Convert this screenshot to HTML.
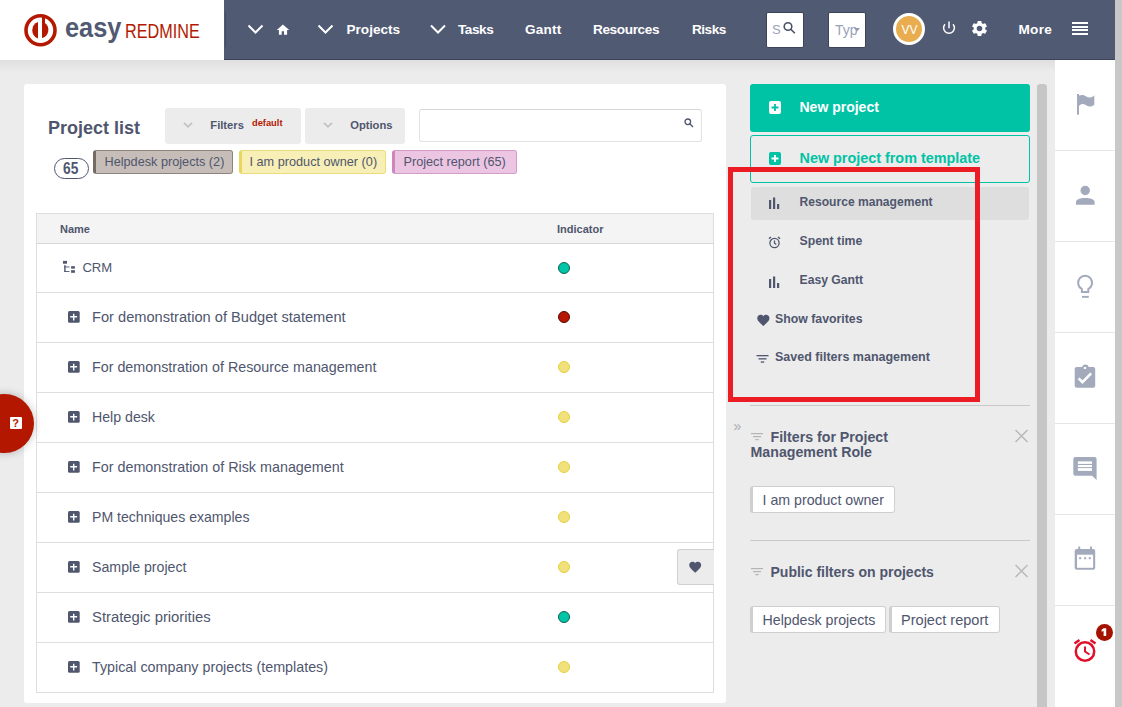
<!DOCTYPE html>
<html><head><meta charset="utf-8">
<style>
*{margin:0;padding:0;box-sizing:border-box}
html,body{width:1122px;height:707px;overflow:hidden;background:#ececec;font-family:"Liberation Sans",sans-serif;color:#4f566e;position:relative}
.a{position:absolute}
.t{position:absolute;white-space:nowrap;line-height:1}
.b{font-weight:bold}
#hdr{left:0;top:0;width:1115px;height:60px;background:#515a73;border-bottom:1px solid #3d4457}
#logo{left:0;top:0;width:224px;height:60px;background:#fff}
#shadow{left:0;top:60px;width:1055px;height:12px;background:linear-gradient(#dfdfdf,#ececec)}
.nav{color:#fff;font-weight:bold;font-size:13.6px}
#main{left:24px;top:84px;width:702px;height:619px;background:#fff;border-radius:3px}
.btn{background:#ececec;border-radius:3px}
.tag{height:24px;border:1px solid;border-left-width:3px;border-radius:3px}
.row{left:36px;width:678px;height:1px;background:#dedede}
.dot{width:12px;height:12px;border-radius:50%;border:1px solid}
.y{background:#f0e17c;border-color:#e6d03c}
.g{background:#00c5a7;border-color:#0e6152}
.r{background:#b51700;border-color:#5a0800}
.plus{width:12px;height:11px;background:#4f566e;border-radius:2px}
.rt{font-size:14.4px}
.side{font-weight:bold;font-size:12.3px}
.wbtn{height:26.5px;background:#fff;border:1px solid #cfcfcf;border-left:3px solid #cfcfcf;border-radius:3px;font-size:14.2px}
</style></head><body>
<!-- header -->
<div id="hdr" class="a"></div>
<div id="logo" class="a"></div>
<div class="a" style="left:1115px;top:0;width:7px;height:707px;background:#c8c8c8"></div>
<svg class="a" style="left:0;top:0" width="224" height="60">
  <circle cx="40.5" cy="30.25" r="14.5" fill="none" stroke="#b31900" stroke-width="3.6"/>
  <path d="M38 22 A8.8 8.8 0 0 0 38 38.5 Z" fill="#b31900"/>
  <path d="M42 15.5 L45 15.5 L45 23 A8.5 8.5 0 0 1 42 38 Z" fill="#b31900"/>
</svg>
<div class="t b" style="left:64.5px;top:15.3px;font-size:27px;color:#525a72;transform:scaleX(0.94);transform-origin:0 0">easy</div>
<div class="t" style="left:125px;top:20.6px;font-size:20.5px;color:#b31900;transform:scaleX(0.79);transform-origin:0 0">REDMINE</div>

<div class="a" style="left:224.8px;top:12px;width:1.2px;height:35px;background:#454c62"></div>
<svg class="a" style="left:240px;top:15px" width="520" height="30" fill="none" stroke="#fff" stroke-width="2">
  <path d="M8.5 10.5 L15.5 17.5 L22.5 10.5"/>
  <path d="M78.5 10.5 L85.5 17.5 L92.5 10.5"/>
  <path d="M191 10.5 L198 17.5 L205 10.5"/>

</svg>
<svg class="a" style="left:270px;top:18px" width="26" height="22"><path fill="#fff" d="M12.9 6.5 L19.2 12 L17.1 12 L17.1 16.8 L14 16.8 L14 13.2 L11.7 13.2 L11.7 16.8 L8.9 16.8 L8.9 12 L6.8 12 Z"/></svg>
<div class="t nav" style="left:346.5px;top:23px">Projects</div>
<div class="t nav" style="left:458px;top:23px;letter-spacing:-0.45px">Tasks</div>
<div class="t nav" style="left:525px;top:23px;letter-spacing:0.2px">Gantt</div>
<div class="t nav" style="left:593px;top:23px;letter-spacing:-0.38px">Resources</div>
<div class="t nav" style="left:692px;top:23px;letter-spacing:-0.5px">Risks</div>

<div class="a" style="left:766px;top:12px;width:38px;height:36px;background:#fff;border:1px solid #3d4356;border-radius:2px"></div>
<div class="t" style="left:772px;top:23px;font-size:13px;color:#9aa2b8">S</div>
<svg class="a" style="left:782px;top:21px" width="15" height="14" fill="none" stroke="#4a5166" stroke-width="1.6"><circle cx="6" cy="5.5" r="3.8"/><path d="M8.8 8.3 L12.8 12.3"/></svg>
<div class="a" style="left:828px;top:12px;width:38px;height:36px;background:#fff;border:1px solid #3d4356;border-radius:2px"></div>
<div class="a" style="left:835px;top:20px;width:22px;height:22px;overflow:hidden"><div class="t" style="left:0;top:3px;font-size:14px;color:#9aa2b8">Typ</div></div>
<svg class="a" style="left:853.5px;top:27.5px" width="7" height="5"><path d="M0 0 L6 0 L3 3.5 Z" fill="#8f98b0"/></svg>

<div class="a" style="left:893px;top:13px;width:32px;height:32px;border-radius:50%;background:#e9ad4f;border:3px solid #fff"></div>
<div class="t" style="left:901.5px;top:23.5px;font-size:12px;color:#fff">VV</div>
<svg class="a" style="left:941px;top:20px" width="16" height="16" fill="none" stroke="#fff" stroke-width="1.5"><path d="M4 4.2 A5.4 5.4 0 1 0 12 4.2"/><path d="M8 1.6 L8 8.2"/></svg>
<svg class="a" style="left:969.7px;top:19.1px" width="19" height="19" viewBox="0 0 24 24"><path fill="#fff" d="M19.14 12.94c.04-.3.06-.61.06-.94 0-.32-.02-.64-.07-.94l2.03-1.58a.49.49 0 0 0 .12-.61l-1.92-3.32a.488.488 0 0 0-.59-.22l-2.39.96c-.5-.38-1.03-.7-1.62-.94l-.36-2.54a.484.484 0 0 0-.48-.41h-3.84c-.24 0-.43.17-.47.41l-.36 2.54c-.59.24-1.13.57-1.62.94l-2.39-.96c-.22-.08-.47 0-.59.22L2.74 8.87c-.12.21-.08.47.12.61l2.03 1.58c-.05.3-.09.63-.09.94s.02.64.07.94l-2.03 1.58a.49.49 0 0 0-.12.61l1.92 3.32c.12.22.37.29.59.22l2.39-.96c.5.38 1.03.7 1.62.94l.36 2.54c.05.24.24.41.48.41h3.84c.24 0 .44-.17.47-.41l.36-2.54c.59-.24 1.13-.56 1.62-.94l2.39.96c.22.08.47 0 .59-.22l1.92-3.32c.12-.22.07-.47-.12-.61l-2.01-1.58zM12 15.6c-1.98 0-3.6-1.62-3.6-3.6s1.62-3.6 3.6-3.6 3.6 1.62 3.6 3.6-1.62 3.6-3.6 3.6z"/></svg>
<div class="t nav" style="left:1018.5px;top:23px;letter-spacing:0.25px">More</div>
<div class="a" style="left:1072px;top:22px;width:16px;height:2px;background:#fff"></div>
<div class="a" style="left:1072px;top:25.5px;width:16px;height:2px;background:#fff"></div>
<div class="a" style="left:1072px;top:29px;width:16px;height:2px;background:#fff"></div>
<div class="a" style="left:1072px;top:32.5px;width:16px;height:2px;background:#fff"></div>

<div id="shadow" class="a"></div>

<!-- main -->
<div id="main" class="a"></div>
<div class="t b" style="left:48px;top:118.8px;font-size:18px;color:#4f566e">Project list</div>
<div class="a btn" style="left:165px;top:108px;width:136px;height:36px"></div>
<svg class="a" style="left:182px;top:120px" width="13" height="10" fill="none" stroke="#c2c2c2" stroke-width="1.8"><path d="M2 2.8 L6 6.8 L10 2.8"/></svg>
<div class="t b" style="left:210.3px;top:120.3px;font-size:11.2px">Filters</div>
<div class="t b" style="left:252px;top:119px;font-size:9.3px;color:#b31900">default</div>
<div class="a btn" style="left:305px;top:108px;width:100px;height:36px"></div>
<svg class="a" style="left:322px;top:120px" width="13" height="10" fill="none" stroke="#c2c2c2" stroke-width="1.8"><path d="M2 2.8 L6 6.8 L10 2.8"/></svg>
<div class="t b" style="left:350.2px;top:120.3px;font-size:11.2px">Options</div>
<div class="a" style="left:419px;top:109px;width:283px;height:33px;border:1px solid #e2e2e2;border-top-color:#d6d6d6;border-radius:3px"></div>
<svg class="a" style="left:684px;top:118px" width="10" height="10" fill="none" stroke="#4f566e" stroke-width="1.3"><circle cx="3.8" cy="3.8" r="2.8"/><path d="M5.8 5.8 L9 9"/></svg>

<div class="a" style="left:54px;top:158px;width:35px;height:21px;border:1px solid #4f566e;border-radius:11px"></div>
<div class="t b" style="left:62.8px;top:161px;font-size:16px;transform:scaleX(0.86);transform-origin:0 0">65</div>
<div class="a tag" style="left:93px;top:150px;width:140px;background:#c6bdb8;border-color:#8e847c;border-left-color:#746a62"></div>
<div class="t" style="left:104.5px;top:156.2px;font-size:12.7px">Helpdesk projects (2)</div>
<div class="a tag" style="left:239px;top:150px;width:147px;background:#f8efb6;border-color:#ecdd7c;border-left-color:#e8d75e"></div>
<div class="t" style="left:249.5px;top:156.2px;font-size:12.7px">I am product owner (0)</div>
<div class="a tag" style="left:392px;top:150px;width:125px;background:#ebc5e2;border-color:#d49bc7;border-left-color:#cf86bd"></div>
<div class="t" style="left:403.5px;top:156.2px;font-size:12.7px">Project report (65)</div>

<!-- table -->
<div class="a" style="left:36px;top:213px;width:678px;height:480px;border:1px solid #dedede;background:linear-gradient(#f4f4f4 30px,#fff 30px)"></div>
<div class="a row" style="top:243px;height:1px;background:#d8d8d8"></div>
<div class="t b" style="left:60px;top:223.7px;font-size:11px">Name</div>
<div class="t b" style="left:557px;top:223.7px;font-size:11px">Indicator</div>
<div class="a row" style="top:292px"></div>
<div class="a row" style="top:342px"></div>
<div class="a row" style="top:392px"></div>
<div class="a row" style="top:442px"></div>
<div class="a row" style="top:492px"></div>
<div class="a row" style="top:542px"></div>
<div class="a row" style="top:592px"></div>
<div class="a row" style="top:642px"></div>

<svg class="a" style="left:58px;top:236px" width="26" height="44" fill="#4f566e"><rect x="5" y="24.9" width="4" height="2.8"/><rect x="6.2" y="29.2" width="1.4" height="6.8"/><rect x="6.2" y="30.5" width="5.3" height="0.9"/><rect x="6.2" y="35.1" width="5.3" height="0.9"/><rect x="13.1" y="30.2" width="3.8" height="2.4"/><rect x="13.1" y="34.2" width="3.8" height="2.6"/></svg>
<div class="t rt" style="left:82.4px;top:261px;font-size:13.1px">CRM</div>
<div class="a dot g" style="left:558px;top:262px"></div>

<svg class="a" style="left:68px;top:310.6px" width="12" height="12"><rect width="11.7" height="11.7" rx="1.5" fill="#4f566e"/><path d="M5.7 2.8V9.4M2.2 5.7H9.1" stroke="#fff" stroke-width="1.4"/></svg>
<div class="t rt" style="left:92px;top:310.0px;font-size:14.64px">For demonstration of Budget statement</div>
<div class="a dot r" style="left:558px;top:311px"></div>
<svg class="a" style="left:68px;top:360.6px" width="12" height="12"><rect width="11.7" height="11.7" rx="1.5" fill="#4f566e"/><path d="M5.7 2.8V9.4M2.2 5.7H9.1" stroke="#fff" stroke-width="1.4"/></svg>
<div class="t rt" style="left:92px;top:360.0px;font-size:14.3px">For demonstration of Resource management</div>
<div class="a dot y" style="left:558px;top:361px"></div>
<svg class="a" style="left:68px;top:410.6px" width="12" height="12"><rect width="11.7" height="11.7" rx="1.5" fill="#4f566e"/><path d="M5.7 2.8V9.4M2.2 5.7H9.1" stroke="#fff" stroke-width="1.4"/></svg>
<div class="t rt" style="left:92px;top:410.0px;font-size:14.17px">Help desk</div>
<div class="a dot y" style="left:558px;top:411px"></div>
<svg class="a" style="left:68px;top:460.6px" width="12" height="12"><rect width="11.7" height="11.7" rx="1.5" fill="#4f566e"/><path d="M5.7 2.8V9.4M2.2 5.7H9.1" stroke="#fff" stroke-width="1.4"/></svg>
<div class="t rt" style="left:92px;top:460.0px;font-size:14.34px">For demonstration of Risk management</div>
<div class="a dot y" style="left:558px;top:461px"></div>
<svg class="a" style="left:68px;top:510.6px" width="12" height="12"><rect width="11.7" height="11.7" rx="1.5" fill="#4f566e"/><path d="M5.7 2.8V9.4M2.2 5.7H9.1" stroke="#fff" stroke-width="1.4"/></svg>
<div class="t rt" style="left:92px;top:510.0px;font-size:14.1px">PM techniques examples</div>
<div class="a dot y" style="left:558px;top:511px"></div>
<svg class="a" style="left:68px;top:560.6px" width="12" height="12"><rect width="11.7" height="11.7" rx="1.5" fill="#4f566e"/><path d="M5.7 2.8V9.4M2.2 5.7H9.1" stroke="#fff" stroke-width="1.4"/></svg>
<div class="t rt" style="left:92px;top:560.0px;font-size:14.18px">Sample project</div>
<div class="a dot y" style="left:558px;top:561px"></div>
<svg class="a" style="left:68px;top:610.6px" width="12" height="12"><rect width="11.7" height="11.7" rx="1.5" fill="#4f566e"/><path d="M5.7 2.8V9.4M2.2 5.7H9.1" stroke="#fff" stroke-width="1.4"/></svg>
<div class="t rt" style="left:92px;top:610.0px;font-size:14.84px">Strategic priorities</div>
<div class="a dot g" style="left:558px;top:611px"></div>
<svg class="a" style="left:68px;top:660.6px" width="12" height="12"><rect width="11.7" height="11.7" rx="1.5" fill="#4f566e"/><path d="M5.7 2.8V9.4M2.2 5.7H9.1" stroke="#fff" stroke-width="1.4"/></svg>
<div class="t rt" style="left:92px;top:660.0px;font-size:14.3px">Typical company projects (templates)</div>
<div class="a dot y" style="left:558px;top:661px"></div>
<!--ROWS_END-->

<!-- sidebar -->
<div class="a" style="left:750px;top:84px;width:280px;height:47.5px;background:#00c3a5;border-radius:3px"></div>
<div class="a" style="left:769px;top:101px;width:12px;height:13px;background:#fff;border-radius:2px"></div>
<svg class="a" style="left:769px;top:101px" width="12" height="13"><path d="M6 3V10M2.5 6.5H9.5" stroke="#00c3a5" stroke-width="1.8"/></svg>
<div class="t b" style="left:799.5px;top:100.2px;font-size:14px;color:#fff">New project</div>
<div class="a" style="left:750px;top:135px;width:280px;height:48px;border:1px solid #00c3a5;border-radius:3px"></div>
<div class="a" style="left:769px;top:152px;width:12px;height:13px;background:#00c3a5;border-radius:2px"></div>
<svg class="a" style="left:769px;top:152px" width="12" height="13"><path d="M6 3V10M2.5 6.5H9.5" stroke="#fff" stroke-width="1.8"/></svg>
<div class="t b" style="left:799.5px;top:150.5px;font-size:14.38px;color:#00c3a5">New project from template</div>

<div class="a" style="left:751px;top:187px;width:278px;height:33px;background:#dedede;border-radius:3px"></div>
<svg class="a" style="left:768px;top:197px" width="13" height="13" fill="#4f566e"><rect x="1" y="3" width="2.2" height="9"/><rect x="5" y="0.5" width="2.2" height="11.5"/><rect x="9" y="7" width="2.2" height="5"/></svg>
<div class="t side" style="left:799.5px;top:196px;font-size:12.1px">Resource management</div>
<svg class="a" style="left:768px;top:235.5px" width="13" height="13" fill="none" stroke="#4f566e" stroke-width="1.3"><circle cx="6.5" cy="7" r="4.6"/><path d="M6.5 4.5V7.2L8.3 8.5"/><path d="M1 2.6L3 1M12 2.6L10 1" stroke-width="1.4"/></svg>
<div class="t side" style="left:799.5px;top:235.2px">Spent time</div>
<svg class="a" style="left:768px;top:276px" width="13" height="13" fill="#4f566e"><rect x="1" y="3" width="2.2" height="9"/><rect x="5" y="0.5" width="2.2" height="11.5"/><rect x="9" y="7" width="2.2" height="5"/></svg>
<div class="t side" style="left:799.5px;top:273.8px;font-size:12.2px">Easy Gantt</div>
<svg class="a" style="left:755.5px;top:312.8px" width="14.7" height="13.5" viewBox="0 0 24 22"><path fill="#4f566e" d="M12 21.4L10.6 20C5.4 15.4 2 12.3 2 8.5 2 5.4 4.4 3 7.5 3c1.7 0 3.4.8 4.5 2.1C13.1 3.8 14.8 3 16.5 3 19.6 3 22 5.4 22 8.5c0 3.8-3.4 6.9-8.6 11.5L12 21.4z"/></svg>
<div class="t side" style="left:775px;top:313px">Show favorites</div>
<svg class="a" style="left:756px;top:354px" width="14" height="10" fill="#4f566e"><rect x="0.5" y="1" width="12" height="1.3"/><rect x="2.5" y="4.2" width="8" height="1.3"/><rect x="4.8" y="7.4" width="3.4" height="1.3"/></svg>
<div class="t side" style="left:775px;top:351.3px;font-size:12.5px">Saved filters management</div>

<div class="a" style="left:728px;top:167px;width:252px;height:235px;border:5px solid #ec1c24"></div>

<div class="a" style="left:750px;top:405px;width:280px;height:1px;background:#c9c9c9"></div>
<div class="t" style="left:733.5px;top:418.5px;font-size:14px;color:#aaa">&raquo;</div>
<svg class="a" style="left:751px;top:432.7px" width="12" height="8" fill="#b4b4b4"><rect x="0" y="0" width="12" height="1.2"/><rect x="2" y="3" width="8" height="1.2"/><rect x="4.3" y="6" width="3.4" height="1.2"/></svg>
<div class="t b" style="left:770.5px;top:430px;font-size:14.2px">Filters for Project</div>
<div class="t b" style="left:750.5px;top:444.7px;font-size:14.2px">Management Role</div>
<svg class="a" style="left:1014px;top:429px" width="15" height="14" fill="none" stroke="#b9b9b9" stroke-width="1.5"><path d="M1.5 1L13.5 13M13.5 1L1.5 13"/></svg>
<div class="a wbtn" style="left:750px;top:486px;width:145px"></div>
<div class="t" style="left:762.5px;top:492.8px;font-size:14.2px">I am product owner</div>

<div class="a" style="left:750px;top:540px;width:280px;height:1px;background:#c9c9c9"></div>
<svg class="a" style="left:751px;top:567.5px" width="12" height="8" fill="#b4b4b4"><rect x="0" y="0" width="12" height="1.2"/><rect x="2" y="3" width="8" height="1.2"/><rect x="4.3" y="6" width="3.4" height="1.2"/></svg>
<div class="t b" style="left:770.5px;top:565.3px;font-size:14px">Public filters on projects</div>
<svg class="a" style="left:1014px;top:564px" width="15" height="14" fill="none" stroke="#b9b9b9" stroke-width="1.5"><path d="M1.5 1L13.5 13M13.5 1L1.5 13"/></svg>
<div class="a wbtn" style="left:750px;top:606px;width:136px"></div>
<div class="t" style="left:762.5px;top:612.8px;font-size:14.2px">Helpdesk projects</div>
<div class="a wbtn" style="left:889px;top:606px;width:111px"></div>
<div class="t" style="left:901px;top:612.5px;font-size:14.55px">Project report</div>

<!-- sidebar scrollbar -->
<div class="a" style="left:1037px;top:84px;width:10px;height:630px;background:#c6c6c6;border-radius:3px 3px 0 0"></div>

<!-- right icon bar -->
<div class="a" style="left:1055px;top:60px;width:60px;height:647px;background:#fff"></div>
<div class="a" style="left:1055px;top:150px;width:60px;height:1px;background:#e6e6e6"></div>
<div class="a" style="left:1055px;top:241px;width:60px;height:1px;background:#e6e6e6"></div>
<div class="a" style="left:1055px;top:332px;width:60px;height:1px;background:#e6e6e6"></div>
<div class="a" style="left:1055px;top:423px;width:60px;height:1px;background:#e6e6e6"></div>
<div class="a" style="left:1055px;top:514px;width:60px;height:1px;background:#e6e6e6"></div>
<div class="a" style="left:1055px;top:605px;width:60px;height:1px;background:#e6e6e6"></div>
<svg class="a" style="left:1068px;top:88px" width="34" height="32" fill="#a3aabc"><rect x="9" y="6" width="2" height="20.7"/><path d="M11 7.6 C13 7, 14.5 6.8, 16.5 7.5 C19 8.8, 20.5 10, 23 9.3 C24.5 8.9, 25.5 8.1, 26.3 7.2 L26.3 16.7 C24.5 18.2, 22.5 18.8, 20.5 18.3 C18.5 17.6, 17 16, 14.5 16 C13 16, 12 16.8, 11 18.1 Z"/></svg>
<svg class="a" style="left:1068px;top:178px" width="34" height="32" fill="#a3aabc"><circle cx="17.2" cy="12.5" r="4.7"/><path d="M8 26.8 L8 24 C8 21, 12.5 19.9, 17.3 19.9 C22 19.9, 26.6 21, 26.6 24 L26.6 26.8 Z"/></svg>
<svg class="a" style="left:1068px;top:270px" width="34" height="32"><path d="M13.9 19.1 A7 7 0 1 1 20.3 19.1 L20.3 21.9 L13.9 21.9 Z" fill="none" stroke="#a3aabc" stroke-width="2"/><rect x="14" y="25.9" width="6.8" height="1.9" fill="#a3aabc"/></svg>
<svg class="a" style="left:1068px;top:360px" width="34" height="32"><rect x="6.7" y="7" width="20.5" height="20.7" rx="2" fill="#a3aabc"/><circle cx="17.4" cy="7.6" r="3.2" fill="#a3aabc"/><rect x="15.9" y="7" width="2.2" height="2" fill="#fff"/><path d="M10.6 18.3 L14.5 22.2 L23.1 13.4" fill="none" stroke="#fff" stroke-width="2.6"/></svg>
<svg class="a" style="left:1068px;top:451px" width="34" height="32"><path fill="#a3aabc" d="M7.3 5.9 H26.6 A2 2 0 0 1 28.6 7.9 V29 L24 24.7 H7.3 A2 2 0 0 1 5.3 22.7 V7.9 A2 2 0 0 1 7.3 5.9Z"/><rect x="9.9" y="10.4" width="14.1" height="9.5" fill="#fff"/><rect x="9.9" y="12.9" width="14.1" height="1.1" fill="#a3aabc"/><rect x="9.9" y="16.1" width="14.1" height="1" fill="#a3aabc"/></svg>
<svg class="a" style="left:1068px;top:542px" width="34" height="32" fill="#a3aabc"><rect x="6.7" y="7" width="20.5" height="20.7" rx="2"/><rect x="9.05" y="12.7" width="16.05" height="13.1" fill="#fff"/><rect x="10.2" y="4.5" width="2" height="4" rx="0.5"/><rect x="22" y="4.5" width="2" height="4" rx="0.5"/><rect x="11.1" y="15.2" width="2" height="2"/><rect x="16.1" y="15.2" width="2" height="2"/><rect x="20.8" y="15.2" width="2" height="2"/></svg>
<svg class="a" style="left:1072px;top:637px" width="26" height="28" fill="none" stroke="#e0102b"><circle cx="13" cy="14.5" r="9.2" stroke-width="2.5"/><path d="M13 9.5 V14.5 L17.5 17.5" stroke-width="2"/><path d="M2.5 6.5 L7.5 3 M23.5 6.5 L18.5 3" stroke-width="2.5"/></svg>
<div class="a" style="left:1096px;top:624px;width:17px;height:17px;border-radius:50%;background:#a51200"></div>
<svg class="a" style="left:1096px;top:624px" width="17" height="17"><path fill="#fff" d="M7.6 4.2 H10.2 V12 H7.6 V7 L5.6 7.8 V5.7 Z"/></svg>

<!-- help button -->
<div class="a" style="left:-25px;top:394px;width:59px;height:59px;border-radius:50%;background:#b31700;box-shadow:0 0 8px rgba(0,0,0,.25)"></div>
<div class="a" style="left:10px;top:417px;width:12px;height:12px;background:#fff;border-radius:1px"></div>
<div class="t b" style="left:12.3px;top:417.5px;font-size:11px;color:#b31700">?</div>

<!-- heart button -->
<div class="a" style="left:677px;top:549px;width:37px;height:36px;background:#ececec;border:1px solid #d0d0d0;border-right:none;border-radius:3px 0 0 3px"></div>
<svg class="a" style="left:688.3px;top:559.6px" width="14.4" height="13.2" viewBox="0 0 24 22"><path fill="#4f566e" d="M12 21.4L10.6 20C5.4 15.4 2 12.3 2 8.5 2 5.4 4.4 3 7.5 3c1.7 0 3.4.8 4.5 2.1C13.1 3.8 14.8 3 16.5 3 19.6 3 22 5.4 22 8.5c0 3.8-3.4 6.9-8.6 11.5L12 21.4z"/></svg>

</body></html>
